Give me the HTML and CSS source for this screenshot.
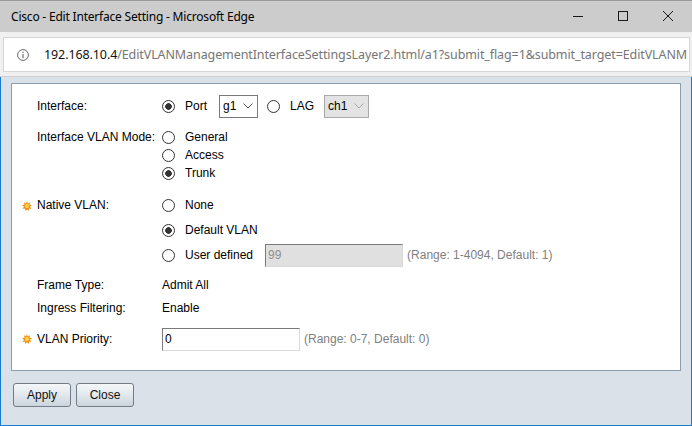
FILE: index.html
```html
<!DOCTYPE html>
<html>
<head>
<meta charset="utf-8">
<link rel="stylesheet" href="styles.css">
</head>
<body>
<div class="titlebar">
  <span class="title">Cisco - Edit Interface Setting - Microsoft Edge</span>
  <div class="controls">
    <span class="ctl"><svg width="10" height="10" viewBox="0 0 10 10"><path d="M0 5.5H10" stroke="#1a1a1a" stroke-width="1"/></svg></span>
    <span class="ctl"><svg width="10" height="10" viewBox="0 0 10 10"><rect x="0.5" y="0.5" width="9" height="9" fill="none" stroke="#1a1a1a" stroke-width="1"/></svg></span>
    <span class="ctl"><svg width="10" height="10" viewBox="0 0 10 10"><path d="M0 0L10 10M10 0L0 10" stroke="#1a1a1a" stroke-width="1"/></svg></span>
  </div>
</div>
<div class="addrbar">
  <div class="addrbox">
    <svg class="info" width="12" height="12" viewBox="0 0 12 12"><circle cx="6" cy="6" r="5.4" fill="none" stroke="#6b6b6b" stroke-width="1"/><path d="M6 5V9.2" stroke="#6b6b6b" stroke-width="1.1"/><circle cx="6" cy="3.3" r="0.7" fill="#6b6b6b"/></svg>
    <span class="url"><span class="host">192.168.10.4</span>/EditVLANManagementInterfaceSettingsLayer2.html/a1?submit_flag=1&amp;submit_target=EditVLANM</span>
  </div>
</div>
<div class="client">
  <div class="panel">
    <div class="row r-interface">
      <div class="mark"></div>
      <div class="label">Interface:</div>
      <div class="value">
        <div class="line h24">
          <input type="radio" name="iface" checked><span class="rtext">Port</span>
          <span class="select sel-g1">g1<svg width="10" height="6" viewBox="0 0 10 6"><path d="M0.5 0.5L5 5L9.5 0.5" fill="none" stroke="#555" stroke-width="1"/></svg></span>
          <input type="radio" name="iface" class="lag"><span class="rtext">LAG</span>
          <span class="select sel-ch1 disabled">ch1<svg width="10" height="6" viewBox="0 0 10 6"><path d="M0.5 0.5L5 5L9.5 0.5" fill="none" stroke="#a6a6a6" stroke-width="1"/></svg></span>
        </div>
      </div>
    </div>
    <div class="row r-mode">
      <div class="mark"></div>
      <div class="label h18">Interface VLAN Mode:</div>
      <div class="value">
        <div class="line h18"><input type="radio" name="mode"><span class="rtext">General</span></div>
        <div class="line h18"><input type="radio" name="mode"><span class="rtext">Access</span></div>
        <div class="line h18"><input type="radio" name="mode" checked><span class="rtext">Trunk</span></div>
      </div>
    </div>
    <div class="row r-native">
      <div class="mark h25"><svg class="req" width="10" height="10" viewBox="0 0 18 18"><polygon points="9,0 10.6,4.4 14.7,2.1 13.3,6.6 18,7.4 14.3,10.3 17.3,14 12.6,13.7 12.2,18 9,14.7 5.8,18 5.4,13.7 0.7,14 3.7,10.3 0,7.4 4.7,6.6 3.3,2.1 7.4,4.4" fill="#f08a10"/><circle cx="9" cy="9" r="4" fill="#ffcf4a"/></svg></div>
      <div class="label h25">Native VLAN:</div>
      <div class="value">
        <div class="line h25"><input type="radio" name="native"><span class="rtext">None</span></div>
        <div class="line h25"><input type="radio" name="native" checked><span class="rtext">Default VLAN</span></div>
        <div class="line h25"><input type="radio" name="native"><span class="rtext">User defined</span><span class="field disabled vlan-field">99</span><span class="hint">(Range: 1-4094, Default: 1)</span></div>
      </div>
    </div>
    <div class="row r-frame">
      <div class="mark"></div>
      <div class="label h24">Frame Type:</div>
      <div class="value"><div class="line h24">Admit All</div></div>
    </div>
    <div class="row r-ingress">
      <div class="mark"></div>
      <div class="label h23">Ingress Filtering:</div>
      <div class="value"><div class="line h23">Enable</div></div>
    </div>
    <div class="row r-priority">
      <div class="mark h24"><svg class="req" width="10" height="10" viewBox="0 0 18 18"><polygon points="9,0 10.6,4.4 14.7,2.1 13.3,6.6 18,7.4 14.3,10.3 17.3,14 12.6,13.7 12.2,18 9,14.7 5.8,18 5.4,13.7 0.7,14 3.7,10.3 0,7.4 4.7,6.6 3.3,2.1 7.4,4.4" fill="#f08a10"/><circle cx="9" cy="9" r="4" fill="#ffcf4a"/></svg></div>
      <div class="label h24">VLAN Priority:</div>
      <div class="value"><div class="line h24"><span class="field prio-field">0</span><span class="hint">(Range: 0-7, Default: 0)</span></div></div>
    </div>
  </div>
  <div class="buttons">
    <button class="btn">Apply</button>
    <button class="btn">Close</button>
  </div>
</div>
</body>
</html>
```
FILE: styles.css
```css
html, body {
  margin: 0;
  padding: 0;
}
body {
  width: 692px;
  height: 426px;
  overflow: hidden;
  background: #dae1e8;
  font-family: "Liberation Sans", Arial, sans-serif;
  font-size: 12px;
  color: #000;
}

/* title bar */
.titlebar {
  height: 32px;
  box-sizing: border-box;
  background: #cccccc;
  border-top: 1px solid #9a9a9a;
  display: flex;
  align-items: center;
  padding-left: 11px;
  font-family: "Noto Sans", "DejaVu Sans", sans-serif;
  font-size: 12px;
  color: #000;
}
.title {
  letter-spacing: -0.2px;
}
.controls {
  margin-left: auto;
  margin-right: 2px;
  display: flex;
  align-self: stretch;
}
.ctl {
  width: 45px;
  display: flex;
  align-items: center;
  justify-content: center;
  padding-bottom: 2px;
}
.ctl svg {
  display: block;
}

/* address bar */
.addrbar {
  height: 45px;
  box-sizing: border-box;
  background: #f0f0f0;
  border-bottom: 1px solid #cfcfcf;
  padding: 5px 2px 0 3px;
}
.addrbox {
  height: 35px;
  box-sizing: border-box;
  background: #fff;
  border: 1px solid #d6d6d6;
  display: flex;
  align-items: center;
  padding-left: 13px;
  overflow: hidden;
  white-space: nowrap;
}
.info {
  flex: none;
  display: block;
}
.url {
  margin-left: 15px;
  font-family: "Noto Sans", "DejaVu Sans", sans-serif;
  font-size: 12.5px;
  color: #767676;
  letter-spacing: -0.1px;
}
.host {
  color: #111;
}

/* client area */
.client {
  height: 349px;
  box-sizing: border-box;
  border: 1px solid #1979ca;
  border-top: none;
  background: #dae1e8;
  padding: 6px 10px 0 10px;
}
.panel {
  height: 288px;
  box-sizing: border-box;
  background: #fff;
  border: 1px solid #8b9eab;
  padding-top: 10px;
}
.row {
  display: grid;
  grid-template-columns: 25px 125px 1fr;
}
.mark {
  padding-left: 10px;
  display: flex;
  align-items: center;
}
.mark .req {
  display: block;
}
.label {
  height: 24px;
  line-height: 24px;
  white-space: nowrap;
}
.value {
  display: flex;
  flex-direction: column;
}
.line {
  display: flex;
  align-items: center;
  white-space: nowrap;
}
.h18 { height: 18px; line-height: 18px; }
.h23 { height: 23px; line-height: 23px; }
.h24 { height: 24px; line-height: 24px; }
.h25 { height: 25px; line-height: 25px; }

.r-mode { margin-top: 10px; }
.r-native { margin-top: 11px; }
.r-frame { margin-top: 5px; }
.r-priority { margin-top: 7px; }
.r-native .mark, .r-priority .mark { align-self: start; }

input[type=radio] {
  appearance: none;
  -webkit-appearance: none;
  width: 13px;
  height: 13px;
  box-sizing: border-box;
  border: 1px solid #333;
  border-radius: 50%;
  background: #fff;
  margin: 0;
  flex: none;
}
input[type=radio]:checked {
  background: radial-gradient(circle, #333 0, #333 3px, #fff 3.6px);
}
.rtext {
  margin-left: 10px;
}
input.lag {
  margin-left: 9px;
}

.select {
  height: 23px;
  box-sizing: border-box;
  border: 1px solid #7a7a7a;
  background: #fff;
  display: flex;
  align-items: center;
  justify-content: space-between;
  padding: 0 4px 0 3px;
  margin-left: 12px;
  line-height: 21px;
}
.select svg {
  display: block;
  margin-left: 5px;
}
.sel-g1 { width: 39px; }
.sel-ch1 { width: 45px; margin-left: 10px; }
.select.disabled {
  background: #e3e3e3;
  border-color: #a9a9a9;
}

.field {
  height: 23px;
  width: 138px;
  box-sizing: border-box;
  border: 1px solid;
  border-color: #7a7a7a #d9d9d9 #d9d9d9 #7a7a7a;
  background: #fff;
  padding-left: 2px;
  line-height: 21px;
  flex: none;
}
.field.disabled {
  background: #e0e0e0;
  color: #8f8f8f;
}
.vlan-field {
  margin-left: 12px;
}
.hint {
  margin-left: 4px;
  color: #808080;
}

/* buttons */
.buttons {
  display: flex;
  gap: 5px;
  margin-top: 12px;
  padding-left: 2px;
}
.btn {
  width: 58px;
  height: 24px;
  box-sizing: border-box;
  border: 1px solid #737d86;
  border-radius: 3px;
  background: linear-gradient(#f5f7f9, #e2e8ed 50%, #ccd5dd);
  font-family: "Liberation Sans", Arial, sans-serif;
  font-size: 12px;
  color: #111;
  padding: 0;
  margin: 0;
}
```
